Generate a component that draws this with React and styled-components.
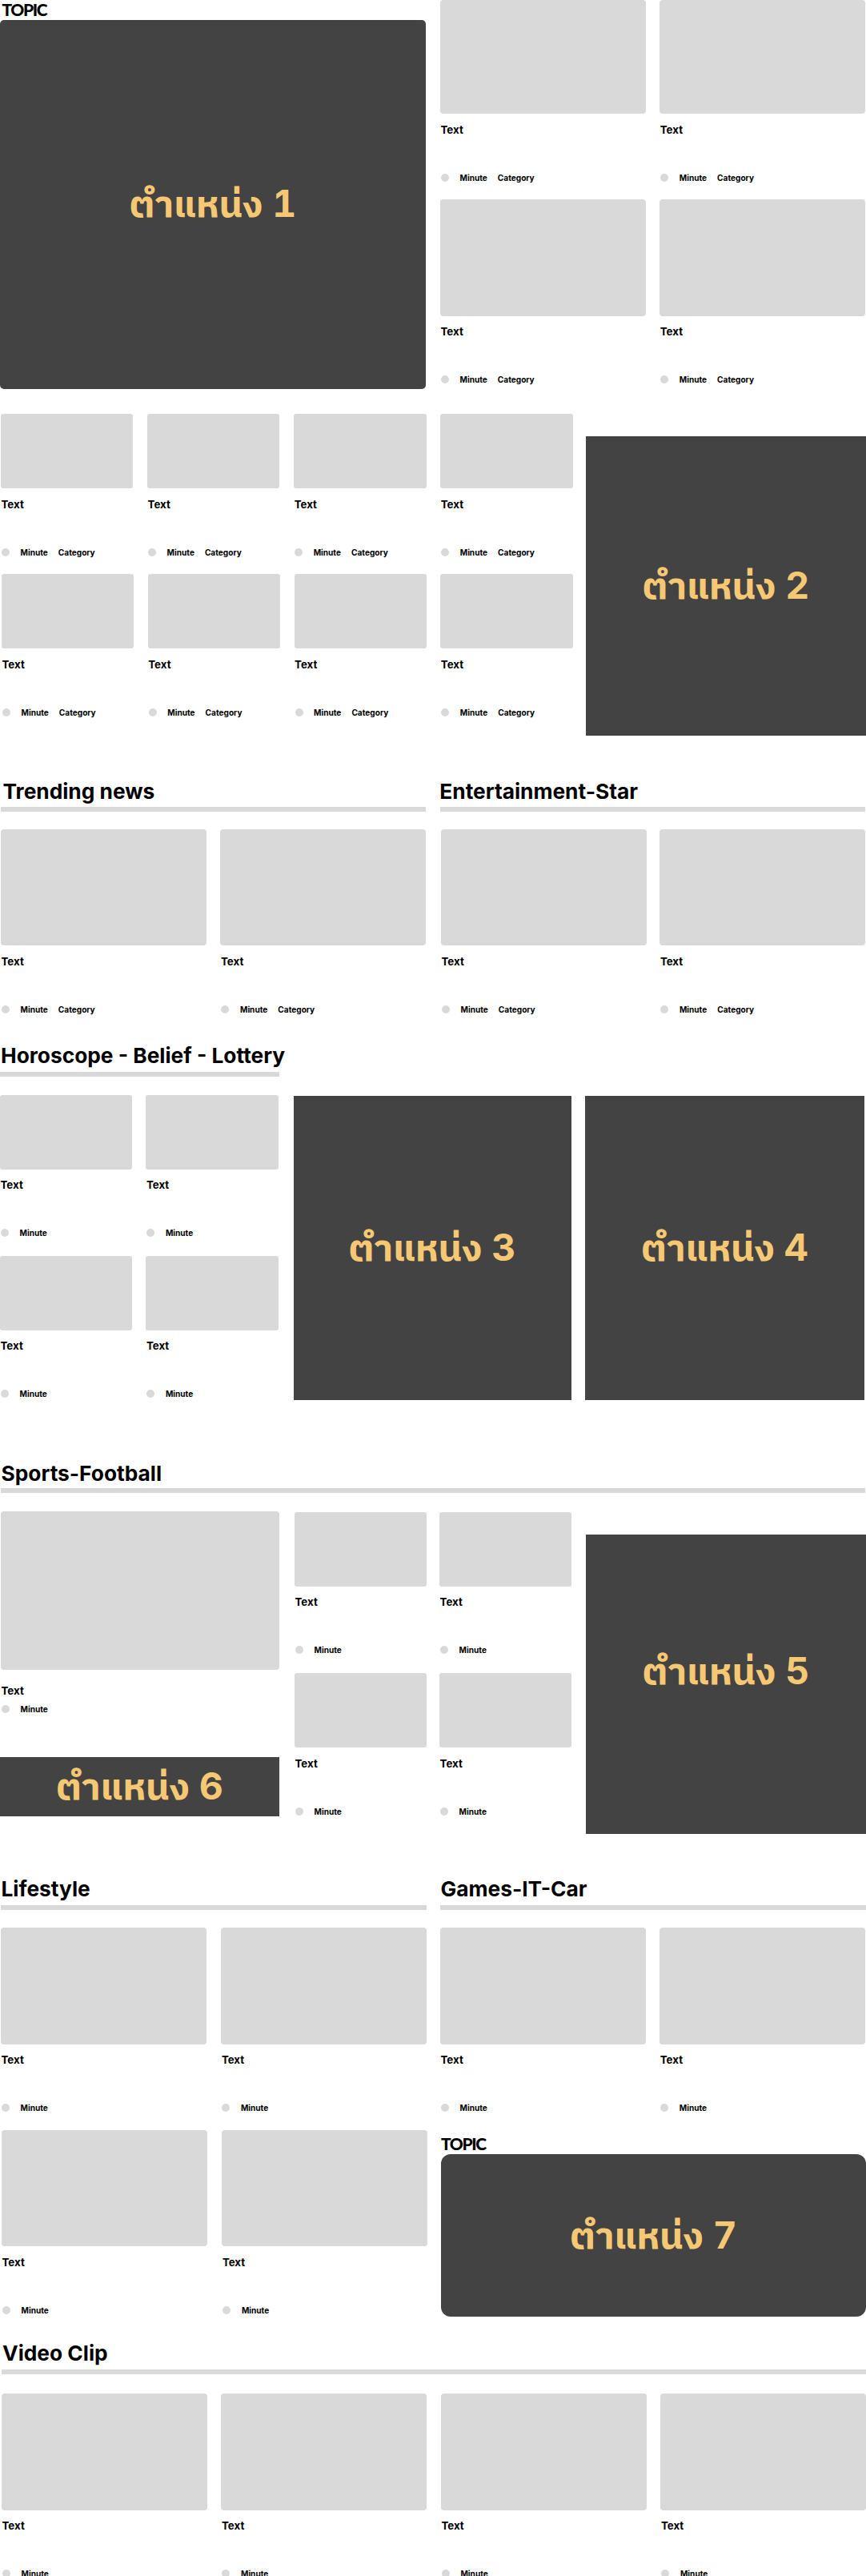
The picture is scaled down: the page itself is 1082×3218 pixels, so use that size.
import React from "react";
import styled, { createGlobalStyle } from "styled-components";

const GlobalStyle = createGlobalStyle`
  * { box-sizing: border-box; }
  body {
    margin: 0;
    background: #fff;
    color: #000;
    font-family: Inter, "Liberation Sans", sans-serif;
  }
`;

const Page = styled.main`
  width: 1082px;
  height: 3218px;
  overflow: hidden;
  background: #fff;
`;

const Band = styled.section`
  display: flex;
  align-items: flex-start;
  height: ${(p) => p.$height}px;
`;

const Column = styled.div`
  flex: none;
  width: ${(p) => p.$width}px;
  margin-left: ${(p) => p.$left || 0}px;
  padding-top: ${(p) => p.$top || 0}px;
`;

const Heading = styled.h2`
  margin: 0 0 ${(p) => p.$gap}px ${(p) => p.$indent}px;
  font-size: 26.3px;
  font-weight: 700;
  line-height: 32px;
  white-space: nowrap;
`;

const Rule = styled.div`
  width: ${(p) => (p.$width ? `${p.$width}px` : "100%")};
  height: 6px;
  margin-bottom: ${(p) => p.$after}px;
  background: #d9d9d9;
`;

const CardRow = styled.div`
  display: flex;
  gap: ${(p) => p.$gap}px;
  height: ${(p) => p.$height || 252.3}px;
  padding-left: ${(p) => p.$indent || 0}px;
`;

const CardBox = styled.article`
  flex: none;
  width: ${(p) => p.$width}px;
`;

const Thumb = styled.div`
  height: ${(p) => p.$height}px;
  border-radius: ${(p) => (p.$height < 100 ? 3 : 4)}px;
  background: #d9d9d9;
`;

const Title = styled.h3`
  margin: ${(p) => (p.$tight ? 15.5 : 9.5)}px 0 0 0.5px;
  font-size: 13.3px;
  font-weight: 700;
  line-height: 20px;
`;

const Meta = styled.div`
  display: flex;
  align-items: center;
  height: 20px;
  margin-top: ${(p) => (p.$tight ? 3 : 40)}px;
  padding-left: 1px;
  font-size: 10.1px;
  font-weight: 700;
  line-height: 20px;
`;

const Dot = styled.i`
  width: 10px;
  height: 10px;
  margin-right: 13.5px;
  border-radius: 50%;
  background: #d9d9d9;
`;

const Category = styled.span`
  margin-left: 13px;
`;

const Ad = styled.div`
  display: flex;
  align-items: center;
  justify-content: center;
  width: ${(p) => p.$width}px;
  height: ${(p) => p.$height}px;
  padding-bottom: ${(p) => (p.$lift || 0) + 2}px;
  border-radius: ${(p) => p.$radius || 0}px;
  background: #434343;
  color: #f6c873;
  font-family: Inter, "IBM Plex Sans Thai", "Noto Sans Thai", sans-serif;
  font-size: 46.5px;
  font-weight: 700;
  font-variant-numeric: tabular-nums;
  line-height: 60px;
  word-spacing: -0.5px;
  white-space: nowrap;
`;

const Topic = styled.div`
  height: ${(p) => p.$height}px;
  padding-left: ${(p) => p.$indent}px;
  font-family: Lato, sans-serif;
  font-size: 21px;
  font-weight: 900;
  line-height: 23px;
  letter-spacing: -1.4px;
`;

function Card({ width, height, category, tight }) {
  return (
    <CardBox $width={width}>
      <Thumb $height={height} />
      <Title $tight={tight}>Text</Title>
      <Meta $tight={tight}>
        <Dot />
        <span>Minute</span>
        {category && <Category>Category</Category>}
      </Meta>
    </CardBox>
  );
}

function Cards({ count, small, category, gap, indent, pitch }) {
  return (
    <CardRow $gap={gap} $indent={indent} $height={pitch}>
      {Array.from({ length: count }, (_, i) => (
        <Card
          key={i}
          width={small ? 165.4 : 256.7}
          height={small ? 93 : 145.3}
          category={category}
        />
      ))}
    </CardRow>
  );
}

function Position({ n, ...box }) {
  return <Ad {...box}><span>ตำแหน่ง {n}</span></Ad>;
}

export default function App() {
  return (
    <Page>
      <GlobalStyle />

      <Band $height={517}>
        <Column $width={532}>
          <Topic $height={25} $indent={2.5}>TOPIC</Topic>
          <Position n={1} $width={532} $height={460.7} $radius={5} />
        </Column>
        <Column $width={532} $left={18}>
          <CardRow $gap={17.6} $height={249.3}>
            <Card width={256.7} height={142} category />
            <Card width={256.7} height={142} category />
          </CardRow>
          <Cards count={2} gap={17.6} category />
        </Column>
      </Band>

      <Band $height={456}>
        <Column $width={732}>
          <Cards count={4} small category gap={17.7} indent={1} pitch={200.4} />
          <Cards count={4} small category gap={17.4} indent={2} pitch={200.4} />
        </Column>
        <Column $width={350} $top={28}>
          <Position n={2} $width={350} $height={373.7} />
        </Column>
      </Band>

      <Band $height={330}>
        <Column $width={531} $left={1}>
          <Heading $indent={2.5} $gap={3}>Trending news</Heading>
          <Rule $after={22} />
          <Cards count={2} gap={17.8} category />
        </Column>
        <Column $width={531} $left={18}>
          <Heading $indent={-0.7} $gap={3}>Entertainment-Star</Heading>
          <Rule $after={22} />
          <Cards count={2} gap={16.7} indent={1} category />
        </Column>
      </Band>

      <Band $height={522}>
        <Column $width={349}>
          <Heading $indent={1} $gap={4}>Horoscope - Belief - Lottery</Heading>
          <Rule $after={22.5} />
          <Cards count={2} small gap={17} pitch={201.3} />
          <Cards count={2} small gap={17} pitch={201.3} />
        </Column>
        <Column $width={347} $left={17.5} $top={66.4}>
          <Position n={3} $width={347} $height={380} />
        </Column>
        <Column $width={349} $left={17.5} $top={66.4}>
          <Position n={4} $width={349} $height={380} />
        </Column>
      </Band>

      <Band $height={519}>
        <Column $width={349}>
          <Heading $indent={1.5} $gap={2.4}>Sports-Football</Heading>
          <CardRow $indent={1} $height={335.6}>
            <div>
              <Rule $width={1080} $after={23} />
              <Card width={348} height={197.8} tight />
            </div>
          </CardRow>
          <Position n={6} $width={349} $height={74.3} />
        </Column>
        <Column $width={364} $left={19} $top={63.5}>
          <Cards count={2} small gap={15.7} pitch={201.8} />
          <Cards count={2} small gap={15.7} pitch={201.8} />
        </Column>
        <Column $width={350} $top={91.6}>
          <Position n={5} $width={350} $height={374.8} $lift={31} />
        </Column>
      </Band>

      <Band $height={580}>
        <Column $width={532} $left={1}>
          <Heading $indent={0.5} $gap={4.3}>Lifestyle</Heading>
          <Rule $after={22} />
          <Cards count={2} gap={18.7} pitch={252.6} />
          <Cards count={2} gap={18.7} indent={1} />
        </Column>
        <Column $width={532} $left={17}>
          <Heading $indent={0.5} $gap={4.3}>Games-IT-Car</Heading>
          <Rule $after={22} />
          <Cards count={2} gap={17.6} pitch={258} />
          <Topic $height={24.6} $indent={1}>TOPIC</Topic>
          <Column $width={531} $left={1}>
            <Position n={7} $width={531} $height={203.6} $radius={12} />
          </Column>
        </Column>
      </Band>

      <Band $height={294}>
        <Column $width={1080} $left={2}>
          <Heading $indent={1} $gap={4.3}>Video Clip</Heading>
          <Rule $after={24} />
          <Cards count={4} gap={17.8} />
        </Column>
      </Band>
    </Page>
  );
}
